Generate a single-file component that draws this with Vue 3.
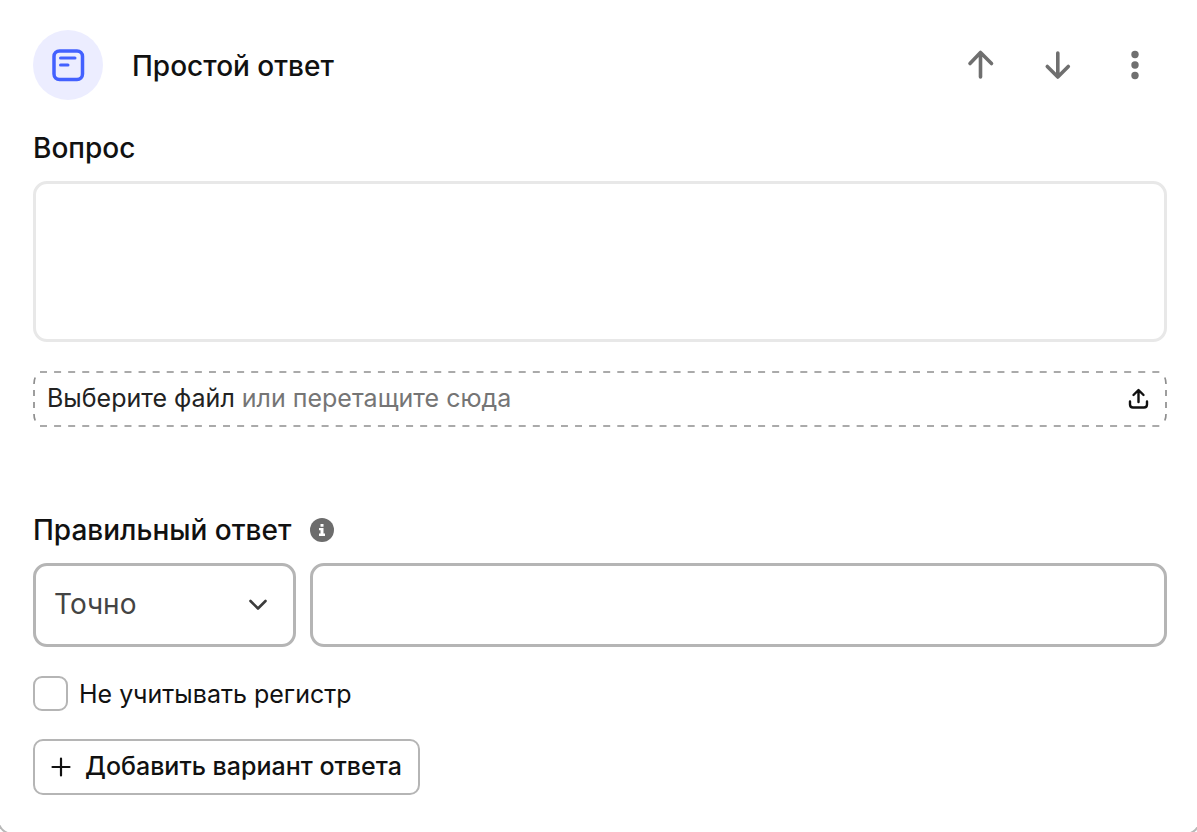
<script setup>
import { ref } from 'vue'

const question = ref('')
const mode = ref('exact')
const answer = ref('')
const ignoreCase = ref(false)
</script>

<template>
  <main class="page">
    <form class="card" @submit.prevent>
      <header class="head">
        <span class="badge">
          <svg width="34" height="34" viewBox="0 0 34 34" fill="none" stroke="#4361ff" stroke-width="3" stroke-linecap="round" aria-hidden="true">
            <rect x="3" y="3" width="28.500" height="28.500" rx="5.500" stroke-width="3.500" />
            <path d="M9.500 10H24M9.500 17H17" />
          </svg>
        </span>
        <h1 class="title">Простой ответ</h1>
        <div class="actions">
          <button type="button" class="icon-btn" aria-label="Вверх">
            <svg width="30" height="32" viewBox="0 0 30 32" fill="none" stroke="#6f6f6f" stroke-width="3.600" stroke-linecap="round" stroke-linejoin="round" aria-hidden="true">
              <path d="M14.500 28V3.500M4 14.500L14.500 3.500L25.500 14.500" />
            </svg>
          </button>
          <button type="button" class="icon-btn" aria-label="Вниз">
            <svg width="30" height="32" viewBox="0 0 30 32" fill="none" stroke="#6f6f6f" stroke-width="3.600" stroke-linecap="round" stroke-linejoin="round" aria-hidden="true">
              <path d="M14.800 4V28M4.300 17.500L14.800 28L25.300 17.500" />
            </svg>
          </button>
          <button type="button" class="icon-btn" aria-label="Меню">
            <svg width="30" height="32" viewBox="0 0 30 32" fill="#6f6f6f" aria-hidden="true">
              <circle cx="15" cy="5.500" r="3.700" />
              <circle cx="15" cy="16" r="3.700" />
              <circle cx="15" cy="26.500" r="3.700" />
            </svg>
          </button>
        </div>
      </header>

      <label class="label" for="question">Вопрос</label>
      <textarea id="question" v-model="question" class="box question"></textarea>

      <label class="drop">
        <svg class="dashes" width="100%" height="100%" fill="none" stroke="#8e8e8e" stroke-width="1.700" aria-hidden="true">
          <g stroke-dasharray="7 7.080">
            <line x1="7" y1="1" x2="99.500%" y2="1" />
            <line x1="7" y1="55" x2="99.500%" y2="55" />
          </g>
          <path d="M2.200 6.500Q1 9 1 13M1 19V25M1 31V37M1 43Q1 47 2.200 49.500" />
          <svg x="100%" overflow="visible">
            <path d="M-2.200 6.500Q-1 9 -1 13M-1 19V25M-1 31V37M-1 43Q-1 47 -2.200 49.500" />
          </svg>
        </svg>
        <input class="file" type="file" />
        <span class="drop-text"><span class="choose">Выберите файл</span> или перетащите сюда</span>
        <svg width="22" height="22" viewBox="0 0 22 22" fill="none" stroke="#111" stroke-width="2.400" stroke-linecap="round" stroke-linejoin="round" aria-hidden="true">
          <path d="M10.500 14V2.500M5.500 7L10.500 2L15.500 7M2 13.500V16.500Q2 19.500 5 19.500H16Q19 19.500 19 16.500V13.500" />
        </svg>
      </label>

      <div class="answer-head">
        <label class="label" for="answer">Правильный ответ</label>
        <svg width="24" height="24" viewBox="0 0 24 24" aria-hidden="true">
          <circle cx="12" cy="12" r="12" fill="#6c6c6c" />
          <path d="M10.500 6H13.500V8.700H10.500ZM9 10H13.500V15.500H15V18H9V15.500H10.500V12.300H9Z" fill="#fff" />
        </svg>
      </div>
      <div class="answer-row">
        <div class="select-wrap">
          <select v-model="mode" class="box select" aria-label="Способ сравнения">
            <option value="exact">Точно</option>
          </select>
          <svg class="chevron" width="20" height="14" viewBox="0 0 20 14" fill="none" stroke="#3c3c3c" stroke-width="2.600" stroke-linecap="round" stroke-linejoin="round" aria-hidden="true">
            <path d="M2.500 3L10 10.500L17.500 3" />
          </svg>
        </div>
        <input id="answer" v-model="answer" class="box answer" type="text" />
      </div>

      <label class="check">
        <input v-model="ignoreCase" type="checkbox" class="tick" />
        <span>Не учитывать регистр</span>
      </label>

      <button type="button" class="add">
        <svg width="20" height="20" viewBox="0 0 20 20" fill="none" stroke="#111" stroke-width="2.200" stroke-linecap="round" aria-hidden="true">
          <path d="M10 1.500V18.500M1.500 10H18.500" />
        </svg>
        <span class="add-text">Добавить вариант ответа</span>
      </button>
    </form>
  </main>
</template>

<style>
body {
  margin: 0;
  background: #fff;
}
</style>

<style scoped>
.page {
  min-height: 100vh;
  overflow: hidden;
  display: flex;
  font-family: Inter, "Liberation Sans", sans-serif;
  color: #111;
}
.page *,
.page {
  box-sizing: border-box;
}
.card {
  flex: 1;
  margin: 0 -4px -3px -3px;
  padding: 30px 32px 38px 34px;
  border: 2px solid #b8b8b8;
  border-top: 0;
  border-radius: 0 0 16px 16px;
  display: flex;
  flex-direction: column;
  align-items: stretch;
}
button,
input,
select,
textarea {
  font: inherit;
  color: inherit;
  margin: 0;
}
.head {
  display: flex;
  align-items: center;
  padding-right: 12px;
}
.badge {
  width: 70px;
  height: 70px;
  border-radius: 50%;
  background: #ecedff;
  display: grid;
  place-items: center;
}
.title {
  margin: 0 0 0 29px;
  padding-top: 2px;
  font-size: 28px;
  line-height: 36px;
  font-weight: 500;
}
.actions {
  margin-left: auto;
  display: flex;
  gap: 37px;
}
.icon-btn {
  width: 40px;
  height: 40px;
  padding: 0;
  border: 0;
  background: none;
  display: grid;
  place-items: center;
}
.label {
  font-size: 28px;
  line-height: 36px;
  font-weight: 500;
}
.head + .label {
  margin-top: 30px;
}
.box {
  border: 3px solid #b5b5b5;
  border-radius: 14px;
  background: #fff;
  outline: none;
}
.question {
  display: block;
  width: 100%;
  height: 161px;
  margin-top: 15px;
  padding: 16px 20px;
  border-color: #e8e8e8;
  resize: none;
  font-size: 25px;
}
.drop {
  position: relative;
  display: flex;
  align-items: center;
  justify-content: space-between;
  height: 56px;
  margin-top: 29px;
  padding: 0 17px 0 14px;
  font-size: 25px;
  line-height: 32px;
  color: #757575;
}
.dashes {
  position: absolute;
  inset: 0;
}
.file {
  position: absolute;
  inset: 0;
  width: 100%;
  opacity: 0;
}
.drop-text,
.add-text {
  padding-bottom: 3px;
}
.choose {
  color: #222;
}
.answer-head {
  display: flex;
  align-items: center;
  gap: 19px;
  margin-top: 85px;
}
.answer-row {
  display: flex;
  gap: 14px;
  margin-top: 15px;
}
.select-wrap {
  position: relative;
  width: 263px;
}
.select {
  display: block;
  appearance: none;
  width: 100%;
  height: 84px;
  padding: 0 60px 2px 18px;
  font-size: 28px;
  color: #444;
}
.chevron {
  position: absolute;
  right: 28px;
  top: 35px;
  pointer-events: none;
}
.answer {
  flex: 1;
  min-width: 0;
  height: 84px;
  padding: 0 20px;
  font-size: 28px;
}
.check {
  display: flex;
  align-items: center;
  align-self: flex-start;
  gap: 11px;
  margin-top: 29px;
  font-size: 25px;
  line-height: 32px;
}
.tick {
  appearance: none;
  width: 35px;
  height: 35px;
  border: 2px solid #b5b5b5;
  border-radius: 9px;
  background: #fff;
}
.tick:checked {
  background: #4361ff;
}
.add {
  display: flex;
  align-items: center;
  align-self: flex-start;
  gap: 14px;
  height: 56px;
  margin-top: 28px;
  padding: 0 16px;
  border: 2px solid #b5b5b5;
  border-radius: 10px;
  background: #fff;
  font-size: 25px;
  line-height: 32px;
  font-weight: 500;
}
</style>
